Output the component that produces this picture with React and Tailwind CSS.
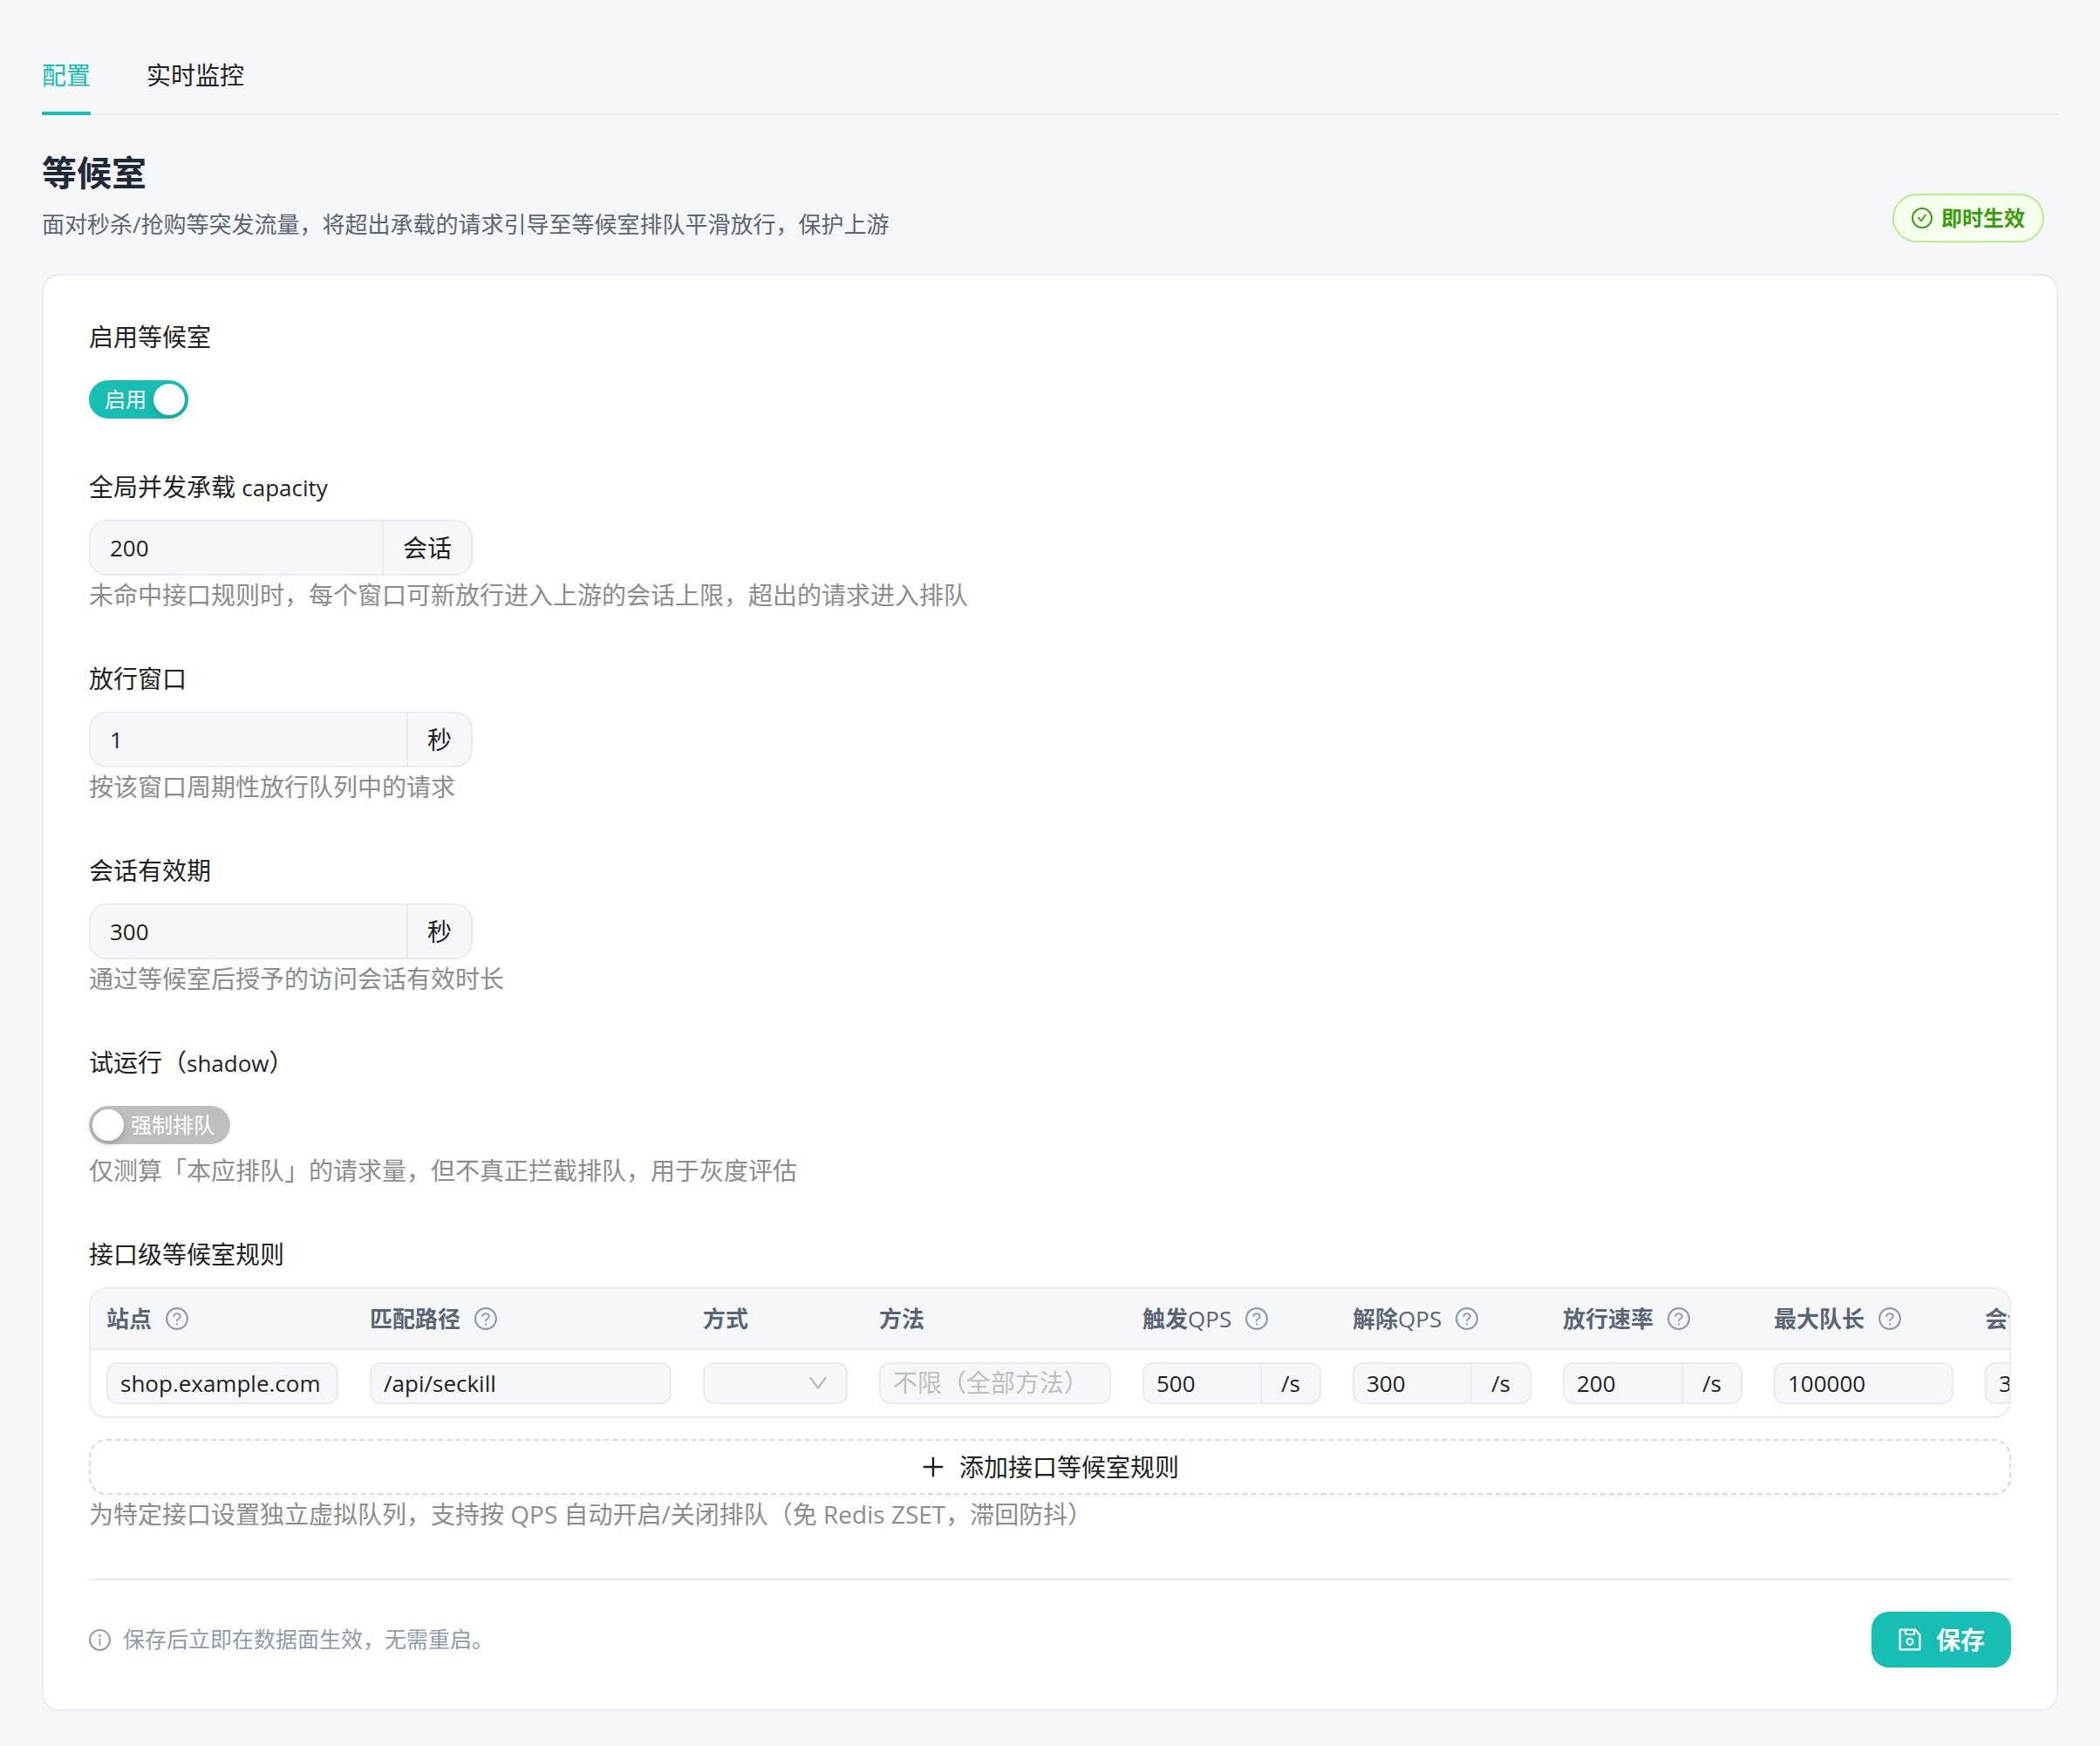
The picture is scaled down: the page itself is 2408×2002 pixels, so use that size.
import React, { useState } from "react";
import {
  AiOutlineCheckCircle,
  AiOutlineDown,
  AiOutlineInfoCircle,
  AiOutlinePlus,
  AiOutlineQuestionCircle,
  AiOutlineSave,
} from "react-icons/ai";

// trims the empty margin round the glyphs
const BOX = "64 64 896 896";

const NUMBER_FIELDS = [
  {
    id: "capacity",
    label: (
      <>
        全局并发承载 <span className="text-[26px]">capacity</span>
      </>
    ),
    value: "200",
    unit: "会话",
    hint: "未命中接口规则时，每个窗口可新放行进入上游的会话上限，超出的请求进入排队",
  },
  {
    id: "window",
    label: "放行窗口",
    value: "1",
    unit: "秒",
    hint: "按该窗口周期性放行队列中的请求",
  },
  {
    id: "ttl",
    label: "会话有效期",
    value: "300",
    unit: "秒",
    hint: "通过等候室后授予的访问会话有效时长",
  },
];

const COLUMNS = [
  { key: "site", title: "站点", help: true, width: "w-[302px]" },
  { key: "path", title: "匹配路径", help: true, width: "w-[382px]" },
  { key: "mode", title: "方式", width: "w-[202px]" },
  { key: "method", title: "方法", width: "w-[302px]" },
  { key: "on", title: "触发", latin: "QPS", help: true, width: "w-[241px]", unit: "/s" },
  { key: "off", title: "解除", latin: "QPS", help: true, width: "w-[241px]", unit: "/s" },
  { key: "rate", title: "放行速率", help: true, width: "w-[242px]", unit: "/s" },
  { key: "queue", title: "最大队长", help: true, width: "w-[242px]" },
  { key: "session", title: "会话有效期", help: true, width: "w-[242px]", unit: "s" },
];

const RULE = {
  site: "shop.example.com",
  path: "/api/seckill",
  method: "",
  on: "500",
  off: "300",
  rate: "200",
  queue: "100000",
  session: "300",
};

function Hint({ children }) {
  return <p className="text-[28px] leading-[44px] text-[#8c8c8c]">{children}</p>;
}

function NumberField({ id, label, value, unit, hint }) {
  return (
    <div className="mb-[52px]">
      <label htmlFor={id} className="mb-4 block h-11 leading-[44px]">
        {label}
      </label>
      <div className="flex h-16 w-[440px] overflow-hidden rounded-[20px] border-2 border-[#e8ecf0] bg-[#f5f7f9]">
        <input
          id={id}
          defaultValue={value}
          className="min-w-0 flex-1 bg-transparent px-[22px] text-[26px] outline-none"
        />
        <span className="flex items-center border-l-2 border-[#e8ecf0] px-[22px]">
          {unit}
        </span>
      </div>
      <Hint>{hint}</Hint>
    </div>
  );
}

function Switch({ id, checked, onChange, onText, offText }) {
  return (
    <button
      id={id}
      type="button"
      role="switch"
      aria-checked={checked}
      onClick={() => onChange(!checked)}
      className={`flex h-11 items-center gap-2 rounded-full px-1 text-[24px] text-white ${
        checked ? "bg-[#17beb4]" : "flex-row-reverse bg-[#bfbfbf]"
      }`}
    >
      <span className={checked ? "pl-3.5" : "pr-3.5"}>
        {checked ? onText : offText}
      </span>
      <span className="size-9 rounded-full bg-white shadow-[0_4px_8px_rgba(0,35,11,0.2)]" />
    </button>
  );
}

function RuleCell({ column }) {
  if (column.key === "mode") {
    return (
      <div className="relative">
        <select
          aria-label={column.title}
          defaultValue=""
          className="block h-12 w-full appearance-none rounded-xl border-2 border-[#e8ecf0] bg-[#f5f7f9] px-3.5 outline-none"
        >
          <option value=""></option>
        </select>
        <AiOutlineDown
          viewBox={BOX}
          className="pointer-events-none absolute top-3 right-[22px] size-6 text-[#b8b8b8]"
        />
      </div>
    );
  }

  return (
    <div className="flex h-12 overflow-hidden rounded-xl border-2 border-[#e8ecf0] bg-[#f5f7f9]">
      <input
        aria-label={column.title}
        defaultValue={RULE[column.key]}
        placeholder={column.key === "method" ? "不限（全部方法）" : undefined}
        className="min-w-0 flex-1 bg-transparent pl-3.5 text-[26px] outline-none placeholder:text-[28px] placeholder:text-[#bfbfbf]"
      />
      {column.unit && (
        <span className="flex items-center border-l-2 border-[#e8ecf0] px-[22px] text-[26px]">
          {column.unit}
        </span>
      )}
    </div>
  );
}

function RulesTable() {
  return (
    <div className="overflow-hidden rounded-[20px] border-2 border-[#e8ecf0]">
      <table className="w-full table-fixed border-separate border-spacing-0">
        <thead>
          <tr className="bg-[#f5f7f9] text-[26px] text-[#5b6575]">
            {COLUMNS.map((c) => (
              <th
                key={c.key}
                className={`h-[70px] border-b-2 border-[#e8ecf0] px-[18px] text-left font-bold whitespace-nowrap ${c.width}`}
              >
                <span className="flex items-center">
                  {c.title}
                  {c.latin && <span className="font-medium">{c.latin}</span>}
                  {c.help && (
                    <AiOutlineQuestionCircle
                      viewBox={BOX}
                      className="ml-4 size-[26px] shrink-0 text-[#8f9bab]"
                    />
                  )}
                </span>
              </th>
            ))}
          </tr>
        </thead>
        <tbody>
          <tr>
            {COLUMNS.map((c) => (
              <td key={c.key} className="px-[18px] py-3.5">
                <RuleCell column={c} />
              </td>
            ))}
          </tr>
        </tbody>
      </table>
    </div>
  );
}

export default function App() {
  const [tab, setTab] = useState("config");
  const [enabled, setEnabled] = useState(true);
  const [shadow, setShadow] = useState(false);

  const tabClass = (name) =>
    `-mb-0.5 border-b-4 pb-5 leading-[44px] ${
      tab === name ? "border-[#17beb4] text-[#17beb4]" : "border-transparent"
    }`;

  return (
    <div className="min-h-screen bg-[#f5f6f8] px-12 py-10 font-['Open_Sans','Noto_Sans_CJK_SC',sans-serif] text-[28px] text-[#1f1f1f]">
      {/* Tabs */}
      <div role="tablist" className="flex gap-16 border-b-2 border-[#e6e8ea] pt-6">
        <button
          type="button"
          role="tab"
          aria-selected={tab === "config"}
          onClick={() => setTab("config")}
          className={tabClass("config")}
        >
          配置
        </button>
        <button
          type="button"
          role="tab"
          aria-selected={tab === "monitor"}
          onClick={() => setTab("monitor")}
          className={tabClass("monitor")}
        >
          实时监控
        </button>
      </div>

      {/* Page header */}
      <header className="mt-9 mb-9 flex items-end justify-between pr-4">
        <div>
          <h1 className="text-[40px] leading-[60px] font-bold text-[#1f2937]">
            等候室
          </h1>
          <p className="mt-2 text-[26px] leading-[42px] text-[#5b6575]">
            面对秒杀/抢购等突发流量，将超出承载的请求引导至等候室排队平滑放行，保护上游
          </p>
        </div>
        <span className="flex h-14 items-center gap-2.5 rounded-full border-2 border-[#b7eb8f] bg-[#f6ffed] px-5 text-[24px] font-bold text-[#389e0d]">
          <AiOutlineCheckCircle viewBox={BOX} className="size-6" />
          即时生效
        </span>
      </header>

      {/* Settings card */}
      <form
        onSubmit={(e) => e.preventDefault()}
        className="rounded-[20px] border-2 border-[#e8ecf0] bg-white px-[52px] py-12"
      >
        <div className="mb-[52px]">
          <label htmlFor="enabled" className="mb-4 block h-11 leading-[44px]">
            启用等候室
          </label>
          <div className="pt-3 pb-1">
            <Switch
              id="enabled"
              checked={enabled}
              onChange={setEnabled}
              onText="启用"
              offText="停用"
            />
          </div>
        </div>

        {NUMBER_FIELDS.map((f) => (
          <NumberField key={f.id} {...f} />
        ))}

        <div className="mb-[52px]">
          <label htmlFor="shadow" className="mb-4 block h-11 leading-[44px]">
            试运行（<span className="text-[26px]">shadow</span>）
          </label>
          <div className="pt-3 pb-2">
            <Switch
              id="shadow"
              checked={shadow}
              onChange={setShadow}
              onText="仅测算"
              offText="强制排队"
            />
          </div>
          <Hint>仅测算「本应排队」的请求量，但不真正拦截排队，用于灰度评估</Hint>
        </div>

        <div className="mb-[52px]">
          <h2 className="mb-4 leading-[44px]">接口级等候室规则</h2>
          <RulesTable />
          <button
            type="button"
            className="mt-6 flex h-16 w-full items-center justify-center gap-4 rounded-[20px] border-2 border-dashed border-[#d9d9d9] shadow-[0_4px_0_rgba(0,0,0,0.02)]"
          >
            <AiOutlinePlus viewBox={BOX} className="size-7" />
            添加接口等候室规则
          </button>
          <Hint>
            为特定接口设置独立虚拟队列，支持按 QPS 自动开启/关闭排队（免 Redis
            ZSET，滞回防抖）
          </Hint>
        </div>

        <div className="flex items-center justify-between border-t-2 border-[#e8ecf0] pt-9">
          <p className="flex items-center gap-3.5 text-[25px] text-[#8f9bab]">
            <AiOutlineInfoCircle viewBox={BOX} className="size-[25px]" />
            保存后立即在数据面生效，无需重启。
          </p>
          <button
            type="submit"
            className="flex h-16 items-center gap-4 rounded-[20px] bg-[#17beb4] px-[30px] font-bold text-white"
          >
            <AiOutlineSave viewBox={BOX} className="size-7" />
            保存
          </button>
        </div>
      </form>
    </div>
  );
}
